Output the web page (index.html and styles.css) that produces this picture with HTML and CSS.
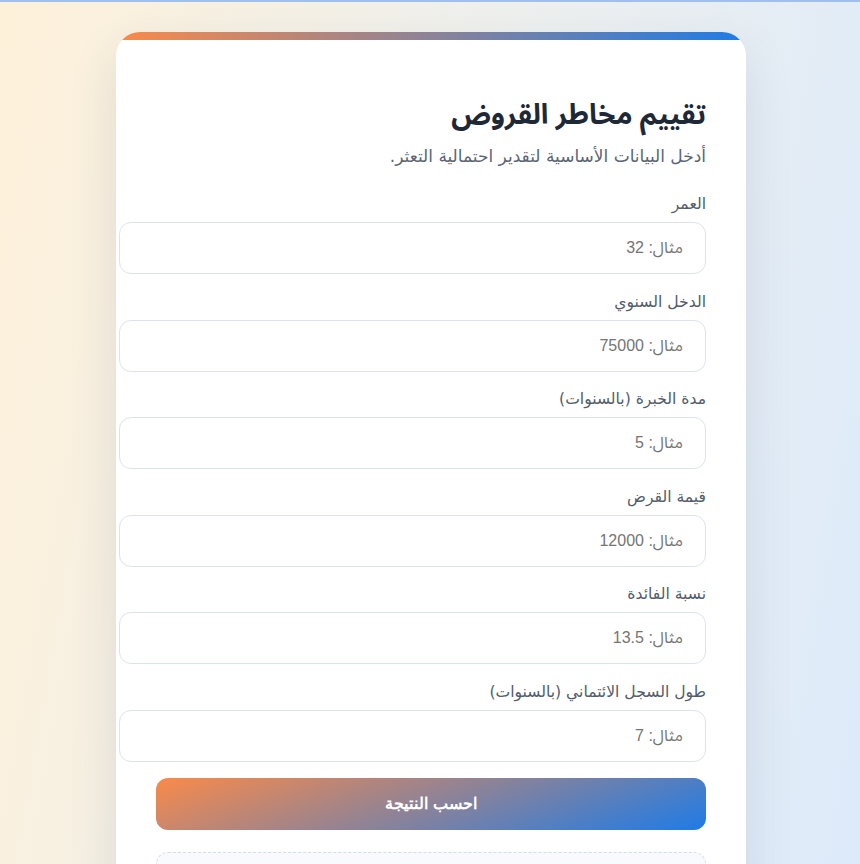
FILE: index.html
```html
<!DOCTYPE html>
<html lang="ar" dir="rtl">
    <head>
        <meta charset="utf-8"/>
        <link rel="stylesheet" href="styles.css">
    </head>
    <body>
        <main class="card">
            <h1 class="card-title">تقييم مخاطر القروض</h1>
            <p class="card-subtitle">أدخل البيانات الأساسية لتقدير احتمالية التعثر.</p>

            <form class="risk-form">
                <label class="field">
                    <span class="field-label">العمر</span>
                    <input type="number" class="field-input" placeholder="مثال: 32">
                </label>
                <label class="field">
                    <span class="field-label">الدخل السنوي</span>
                    <input type="number" class="field-input" placeholder="مثال: 75000">
                </label>
                <label class="field">
                    <span class="field-label">مدة الخبرة (بالسنوات)</span>
                    <input type="number" class="field-input" placeholder="مثال: 5">
                </label>
                <label class="field">
                    <span class="field-label">قيمة القرض</span>
                    <input type="number" class="field-input" placeholder="مثال: 12000">
                </label>
                <label class="field">
                    <span class="field-label">نسبة الفائدة</span>
                    <input type="number" class="field-input" placeholder="مثال: 13.5">
                </label>
                <label class="field">
                    <span class="field-label">طول السجل الائتماني (بالسنوات)</span>
                    <input type="number" class="field-input" placeholder="مثال: 7">
                </label>

                <button type="button" class="submit-btn">احسب النتيجة</button>
            </form>

            <div class="result-box"></div>
        </main>
    </body>
</html>
```

FILE: styles.css
```css
html, body {
    margin: 0;
    padding: 0;
}

body {
    min-height: 100vh;
    border-top: 2px solid #9fc0ee;
    box-sizing: border-box;
    padding: 30px 0 40px 2px;
    background: linear-gradient(100deg, #fef1da 0%, #eef0ee 50%, #dceafb 100%);
    font-family: "DejaVu Sans", sans-serif;
}

.card {
    position: relative;
    width: 630px;
    margin: 0 auto;
    box-sizing: border-box;
    padding: 66px 40px 40px;
    background: #fff;
    border-radius: 24px;
    overflow: hidden;
    box-shadow: 0 20px 50px rgba(40, 60, 100, 0.12);
}

/* gradient strip on top of the card */
.card::before {
    content: "";
    position: absolute;
    top: 0;
    left: 0;
    right: 0;
    height: 8px;
    background: linear-gradient(90deg, #fa8a4a, #1f7be6);
}

.card-title {
    margin: 0 0 10px;
    font-family: "Noto Sans Arabic", sans-serif;
    font-size: 28px;
    line-height: 36px;
    font-weight: bold;
    color: #1e2836;
}

.card-subtitle {
    margin: 0 0 26px;
    font-size: 17px;
    line-height: 24px;
    color: #5b6576;
}

.risk-form {
    display: flex;
    flex-direction: column;
    gap: 17.6px;
}

.field {
    display: flex;
    flex-direction: column;
    gap: 8px;
}

.field-label {
    font-size: 15.6px;
    line-height: 20px;
    color: #525c6c;
}

/* inputs run a little past the left edge of the form */
.field-input {
    height: 52px;
    box-sizing: border-box;
    margin-left: -37px;
    width: calc(100% + 37px);
    padding: 0 22px 0 18px;
    border: 1px solid #dde3ec;
    border-radius: 12px;
    font-family: Arial, "Noto Sans Arabic UI", sans-serif;
    font-size: 16px;
    color: #1e2836;
    background: #fff;
    outline: none;
}

.field-input::placeholder {
    color: #757575;
}

.submit-btn {
    margin-top: -1.6px;
    height: 52px;
    border: none;
    border-radius: 12px;
    background: linear-gradient(160deg, #fa8a4a 0%, #1f7be6 100%);
    color: #fff;
    font-family: Arial, sans-serif;
    font-size: 16px;
    font-weight: bold;
    cursor: pointer;
}

.result-box {
    margin-top: 22px;
    min-height: 90px;
    border: 1px dashed #d3dcea;
    border-radius: 12px;
    background: #f8fafe;
}
```
